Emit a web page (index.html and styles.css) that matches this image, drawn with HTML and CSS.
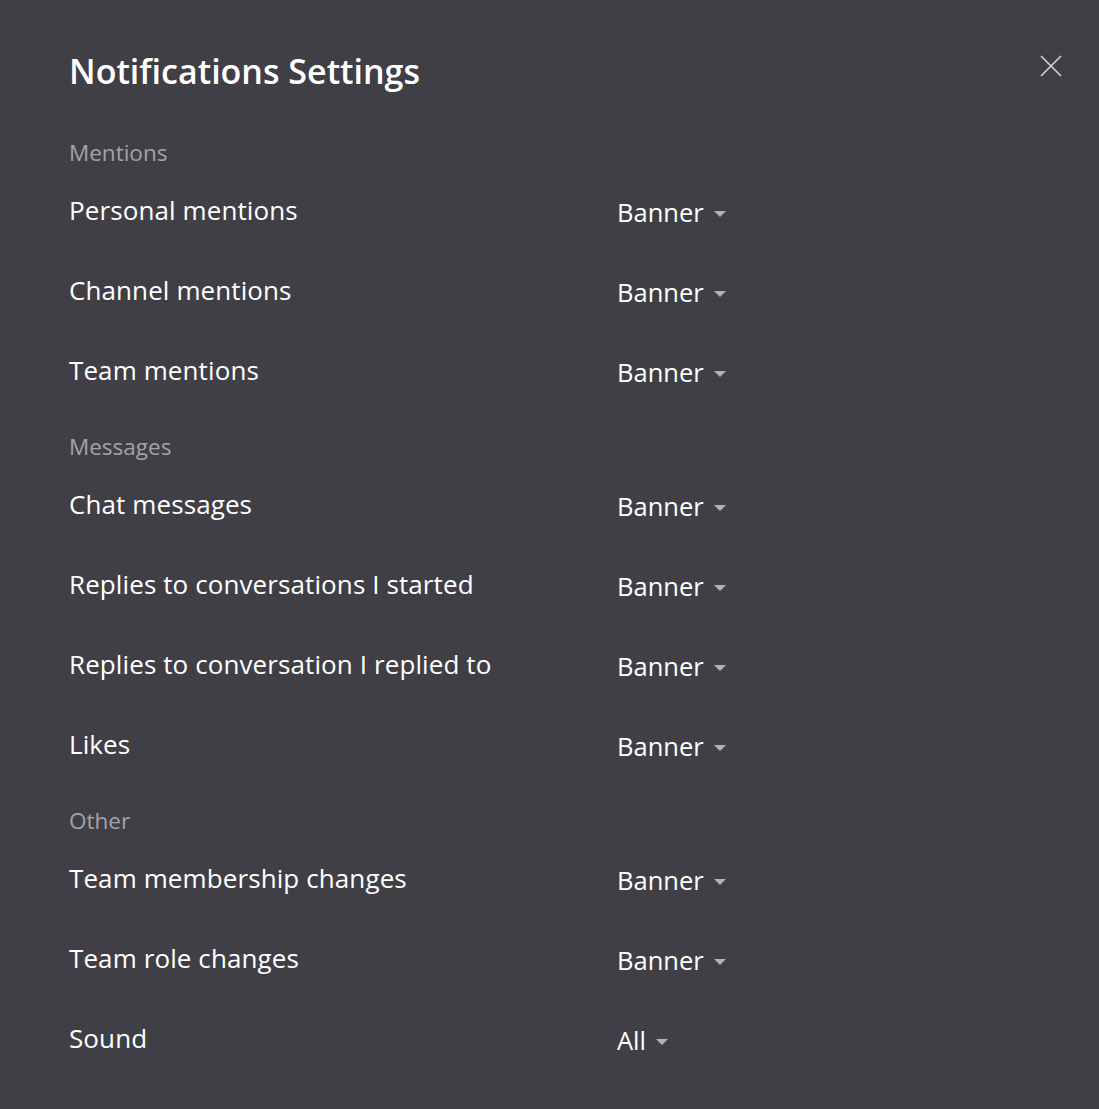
FILE: index.html
```html
<!DOCTYPE html>
<html lang="en">
<head>
<meta charset="utf-8">
<title>Notifications Settings</title>
<link rel="stylesheet" href="styles.css">
</head>
<body>
<div class="dialog">
  <header class="header">
    <h1 class="title">Notifications Settings</h1>
    <button class="close" aria-label="Close">
      <svg width="22" height="22" viewBox="0 0 22 22"><path d="M1 1 L21 21 M21 1 L1 21" stroke="#d4d4d8" stroke-width="1.6" fill="none"/></svg>
    </button>
  </header>

  <section class="group">
    <div class="group-label">Mentions</div>
    <div class="row"><span class="label">Personal mentions</span><span class="value">Banner<i class="caret"></i></span></div>
    <div class="row"><span class="label">Channel mentions</span><span class="value">Banner<i class="caret"></i></span></div>
    <div class="row"><span class="label">Team mentions</span><span class="value">Banner<i class="caret"></i></span></div>
  </section>

  <section class="group">
    <div class="group-label">Messages</div>
    <div class="row"><span class="label">Chat messages</span><span class="value">Banner<i class="caret"></i></span></div>
    <div class="row"><span class="label">Replies to conversations I started</span><span class="value">Banner<i class="caret"></i></span></div>
    <div class="row"><span class="label">Replies to conversation I replied to</span><span class="value">Banner<i class="caret"></i></span></div>
    <div class="row"><span class="label">Likes</span><span class="value">Banner<i class="caret"></i></span></div>
  </section>

  <section class="group">
    <div class="group-label">Other</div>
    <div class="row"><span class="label">Team membership changes</span><span class="value">Banner<i class="caret"></i></span></div>
    <div class="row"><span class="label">Team role changes</span><span class="value">Banner<i class="caret"></i></span></div>
    <div class="row"><span class="label">Sound</span><span class="value">All<i class="caret"></i></span></div>
  </section>
</div>
</body>
</html>
```

FILE: styles.css
```css
html, body {
  margin: 0;
  padding: 0;
  background: #403f46;
}
body {
  font-family: "Open Sans", "Noto Sans", sans-serif;
  color: #ffffff;
  width: 1099px;
  height: 1109px;
  overflow: hidden;
}
.dialog {
  padding: 44px 37px 0 69px;
}
.header {
  display: flex;
  justify-content: space-between;
  align-items: flex-start;
  height: 94px;
}
.title {
  margin: 0;
  font-size: 34px;
  font-weight: 600;
  line-height: 54px;
}
.close {
  background: none;
  border: 0;
  padding: 0;
  margin-top: 11px;
  width: 22px;
  height: 22px;
  cursor: pointer;
}
.close svg { display: block; }
.group-label {
  font-size: 22.5px;
  color: #a3a2a9;
  line-height: 30px;
  height: 30px;
  margin-bottom: 27px;
}
.row {
  display: grid;
  grid-template-columns: 548px auto;
  align-items: start;
  height: 80px;
}
.group .row:last-child { height: 77px; }
.label {
  font-size: 26px;
  line-height: 30px;
  letter-spacing: 0.1px;
}
.value {
  font-size: 25.5px;
  line-height: 30px;
  padding-top: 2px;
  display: inline-flex;
  align-items: center;
}
.caret {
  display: inline-block;
  width: 0;
  height: 0;
  margin-left: 10px;
  margin-top: 4px;
  border-left: 6.5px solid transparent;
  border-right: 6.5px solid transparent;
  border-top: 6px solid #b3b2b8;
}
```
